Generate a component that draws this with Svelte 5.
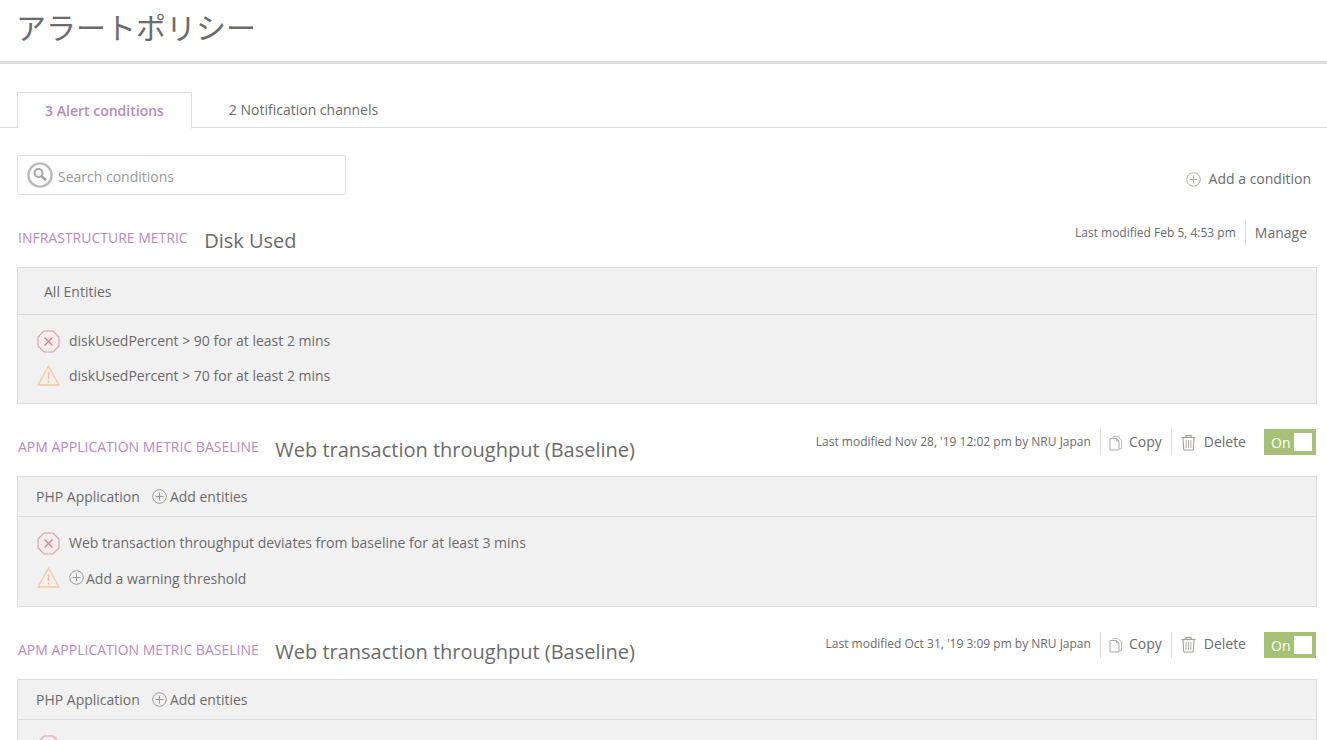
<script>
  const conditions = [
    {
      type: 'INFRASTRUCTURE METRIC',
      name: 'Disk Used',
      modified: 'Last modified Feb 5, 4:53 pm',
      entity: 'All Entities',
      infra: true,
      critical: 'diskUsedPercent > 90 for at least 2 mins',
      warning: 'diskUsedPercent > 70 for at least 2 mins'
    },
    {
      type: 'APM APPLICATION METRIC BASELINE',
      name: 'Web transaction throughput (Baseline)',
      modified: "Last modified Nov 28, '19 12:02 pm by NRU Japan",
      entity: 'PHP Application',
      critical: 'Web transaction throughput deviates from baseline for at least 3 mins'
    },
    {
      type: 'APM APPLICATION METRIC BASELINE',
      name: 'Web transaction throughput (Baseline)',
      modified: "Last modified Oct 31, '19 3:09 pm by NRU Japan",
      entity: 'PHP Application',
      critical: 'Web transaction throughput deviates from baseline for at least 3 mins'
    }
  ];
</script>

{#snippet plus(cls)}
  <svg class={cls} width="15" height="15" viewBox="0 0 15 15" fill="none">
    <circle cx="7.5" cy="7.5" r="6.8" stroke="currentColor" />
    <path d="M7.5 3.5v8M3.5 7.5h8" stroke="currentColor" />
  </svg>
{/snippet}

<div class="page">
  <header class="title-bar">
    <h1>アラートポリシー</h1>
  </header>

  <div class="tabs">
    <button class="tab active">3 Alert conditions</button>
    <button class="tab">2 Notification channels</button>
  </div>

  <div class="toolbar">
    <div class="search">
      <svg width="26" height="26" viewBox="0 0 26 26" fill="none">
        <circle cx="13" cy="13" r="11.6" stroke="#bbb" stroke-width="2.4" />
        <circle cx="11.5" cy="11" r="4" stroke="#a5a5a5" stroke-width="2" />
        <path d="M14.6 14.2l4.4 4" stroke="#a5a5a5" stroke-width="2.8" />
      </svg>
      <span>Search conditions</span>
    </div>
    <a class="add-condition">
      {@render plus('plus-orange')}
      Add a condition
    </a>
  </div>

  {#each conditions as c}
    <section class="condition" class:infra={c.infra}>
      <div class="cond-head">
        <span class="type">{c.type}</span>
        <h2>{c.name}</h2>
        <div class="actions">
          <span class="modified">{c.modified}</span>
          {#if c.infra}
            <span class="action manage">Manage</span>
          {:else}
            <span class="action copy">
              <svg width="14" height="16" viewBox="0 0 14 16" fill="none">
                <path d="M4 2.500v-1h5l3.500 3.500v8.500h-2" stroke="#bbb" />
                <path d="M1 3.500h6.500l2.500 2.500v9h-9z" stroke="#aaa" fill="#fff" />
                <path d="M7.500 3.500v2.500h2.500" stroke="#aaa" />
              </svg>
              Copy
            </span>
            <span class="action">
              <svg width="17" height="16" viewBox="0 0 17 16" fill="none" stroke="#a09a94">
                <path d="M.500 2.500h14M5 2.500v-2h5v2" stroke-width="1.200" />
                <path d="M2 3l.800 12h9.400l.800-12" />
                <path d="M5.200 5v8M7.500 5v8M9.800 5v8" stroke="#b0aaa5" />
              </svg>
              Delete
            </span>
            <span class="toggle">On<i></i></span>
          {/if}
        </div>
      </div>

      <div class="box">
        <div class="entities">
          <span>{c.entity}</span>
          {#if !c.infra}
            <span class="add">{@render plus('plus-gray')}Add entities</span>
          {/if}
        </div>
        <div class="thresholds">
          <div class="threshold">
            <svg class="level" width="23" height="23" viewBox="0 0 23 23" fill="none">
              <path d="M7 1h9l6 6v9l-6 6H7l-6-6V7z" fill="#f4eef1" stroke="#e49aa0" stroke-width="1.100" />
              <path d="M7.500 7.500l8 8M15.500 7.500l-8 8" stroke="#e5767e" stroke-width="1.100" />
            </svg>
            <span class="label">{c.critical}</span>
          </div>
          <div class="threshold">
            <svg class="level warn" width="23" height="21" viewBox="0 0 23 21" fill="none">
              <path d="M11.500 1L22 20H1z" fill="#f7efe8" stroke="#f6c6a0" stroke-width="1.300" stroke-linejoin="round" />
              <path d="M11.500 7v7M11.500 15.500v2" stroke="#f3b8b0" stroke-width="1.400" />
            </svg>
            {#if c.warning}
              <span class="label">{c.warning}</span>
            {:else}
              <span class="add-warning">{@render plus('plus-gray up')}Add a warning threshold</span>
            {/if}
          </div>
        </div>
      </div>
    </section>
  {/each}
</div>

<style>
  :global(body) {
    margin: 0;
    background: #fff;
    overflow: hidden;
  }

  .page {
    height: 740px;
    overflow: hidden;
    font-family: 'Open Sans', 'Noto Sans CJK JP', sans-serif;
    font-size: 14px;
    color: #6b6b6b;
  }

  .title-bar {
    height: 61px;
    border-bottom: 3px solid #ddd;
    padding-left: 16px;
  }

  h1 {
    margin: 0;
    font-weight: 400;
    font-size: 30px;
    line-height: 56px;
    color: #6b6b6b;
  }

  .tabs {
    display: flex;
    height: 35px;
    margin-top: 28px;
    padding-left: 17px;
    border-bottom: 1px solid #ddd;
  }

  .tab {
    border: none;
    background: none;
    padding: 0 0 1px;
    width: 223px;
    height: 35px;
    font: inherit;
    color: #6b6b6b;
  }

  .tab.active {
    box-sizing: content-box;
    width: 173px;
    height: 35px;
    border: 1px solid #ddd;
    border-bottom: 1px solid #fff;
    background: #fff;
    color: #b88ac0;
    font-weight: 600;
    padding-bottom: 0;
  }

  .toolbar {
    display: flex;
    justify-content: space-between;
    align-items: flex-start;
    margin: 27px 16px 0 17px;
  }

  .search {
    box-sizing: border-box;
    width: 329px;
    height: 40px;
    display: flex;
    align-items: center;
    gap: 5px;
    padding-left: 9px;
    border: 1px solid #ddd;
    border-radius: 2px;
    color: #999;
  }

  .search span {
    padding-top: 2px;
  }

  .add-condition {
    display: flex;
    align-items: center;
    gap: 8px;
    margin-top: 14px;
    line-height: 20px;
  }

  .plus-orange {
    color: #b9a99a;
  }

  .plus-gray {
    color: #999;
  }

  .condition {
    padding: 0 10px 0 17px;
    margin-top: 25px;
  }

  .cond-head {
    display: flex;
    align-items: flex-start;
    height: 47px;
  }

  .type {
    color: #b88ac0;
    line-height: 20px;
    margin: 8px 16.5px 0 1px;
  }

  h2 {
    margin: 6px 0 0;
    font-weight: 400;
    font-size: 20px;
    line-height: 30px;
    color: #6b6b6b;
  }

  .condition:last-child h2 {
    margin-top: 5px;
  }

  .actions {
    margin-left: auto;
    display: flex;
    align-items: center;
    height: 26px;
  }

  .modified {
    font-size: 12px;
    padding-bottom: 2px;
  }

  .condition:last-child .modified {
    padding-bottom: 4px;
  }

  .action {
    box-sizing: border-box;
    display: flex;
    align-items: center;
    gap: 6px;
    height: 26px;
    margin-left: 9px;
    padding: 0 0 2px 9px;
    border-left: 1px solid #ddd;
  }

  .action.copy {
    padding-left: 8px;
  }

  .action svg {
    margin-top: 3px;
  }

  .condition:last-child .action {
    padding-bottom: 4px;
  }

  .manage {
    margin-right: 10px;
  }

  .toggle {
    position: relative;
    box-sizing: border-box;
    width: 52px;
    height: 26px;
    margin: 0 1px 0 18px;
    padding-left: 7px;
    background: #a6c176;
    color: #fff;
    line-height: 28px;
  }

  .toggle i {
    position: absolute;
    top: 4px;
    right: 4px;
    width: 18px;
    height: 18px;
    background: #fff;
  }

  .box {
    border: 1px solid #ddd;
    background: #f1f1f1;
  }

  .entities {
    display: flex;
    align-items: center;
    gap: 12px;
    height: 39px;
    padding-left: 18px;
    border-bottom: 1px solid #ddd;
  }

  .infra .entities {
    height: 46px;
    padding-left: 26px;
  }

  .add {
    display: flex;
    align-items: center;
    gap: 3px;
  }

  .thresholds {
    display: flex;
    flex-direction: column;
    gap: 12px;
    padding: 15px 0 16px 19px;
  }

  .infra .thresholds {
    padding-bottom: 15px;
  }

  .threshold {
    display: flex;
    align-items: center;
    gap: 9px;
    height: 23px;
  }

  .warn {
    margin-bottom: 2px;
  }

  .label {
    padding-bottom: 2px;
  }

  .add-warning {
    display: flex;
    align-items: center;
    gap: 2px;
  }

  .up {
    margin-top: -3px;
  }
</style>
